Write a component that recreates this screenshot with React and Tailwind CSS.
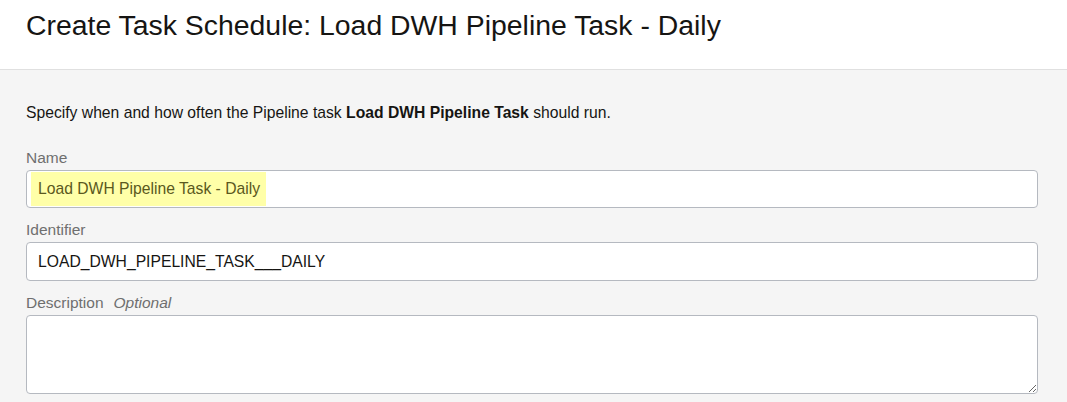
import React from 'react';

const font = { fontFamily: '"Liberation Sans", Arial, sans-serif' };

const Field = ({ label, optional, children }) => (
  <div>
    <label className="block text-[15.5px] leading-[20px] text-[#6f6f6f] pt-[1px] mb-[2px]">
      {label}
      {optional && <span className="ml-[10px] italic text-[#6f6f6f]">Optional</span>}
    </label>
    {children}
  </div>
);

export default function App() {
  return (
    <div className="w-[1067px] h-[402px] overflow-hidden bg-[#f5f5f5] text-[#161513]" style={font}>
      <div className="h-[70px] bg-white border-b border-[#e0e0e0] pl-[26px] pt-[9px]">
        <h1 className="text-[28.4px] leading-[32px] font-normal text-[#161513]">
          Create Task Schedule: Load DWH Pipeline Task - Daily
        </h1>
      </div>

      <div className="pl-[26px] pr-[29px] pt-[33px]">
        <p className="text-[15.7px] leading-[20px] mb-[24px]">
          Specify when and how often the Pipeline task <b>Load DWH Pipeline Task</b> should run.
        </p>

        <div className="flex flex-col gap-[11px]">
          <Field label="Name">
            <div className="h-[38px] bg-white border border-[#b5b9c0] rounded-[4px] pl-[4px] py-[1px] flex">
              <div className="bg-[#ffffa8] h-full flex items-center pl-[7px] pr-[6px] text-[15.7px] text-[#5a5820]">
                Load DWH Pipeline Task - Daily
              </div>
            </div>
          </Field>

          <Field label="Identifier">
            <div className="h-[39px] bg-white border border-[#b5b9c0] rounded-[4px] pl-[11px] flex items-center text-[15.7px]">
              LOAD_DWH_PIPELINE_TASK___DAILY
            </div>
          </Field>

          <Field label="Description" optional>
            <textarea
              className="block w-full h-[79px] bg-white border border-[#b5b9c0] rounded-[4px] resize-y outline-none"
              defaultValue=""
            />
          </Field>
        </div>
      </div>
    </div>
  );
}
